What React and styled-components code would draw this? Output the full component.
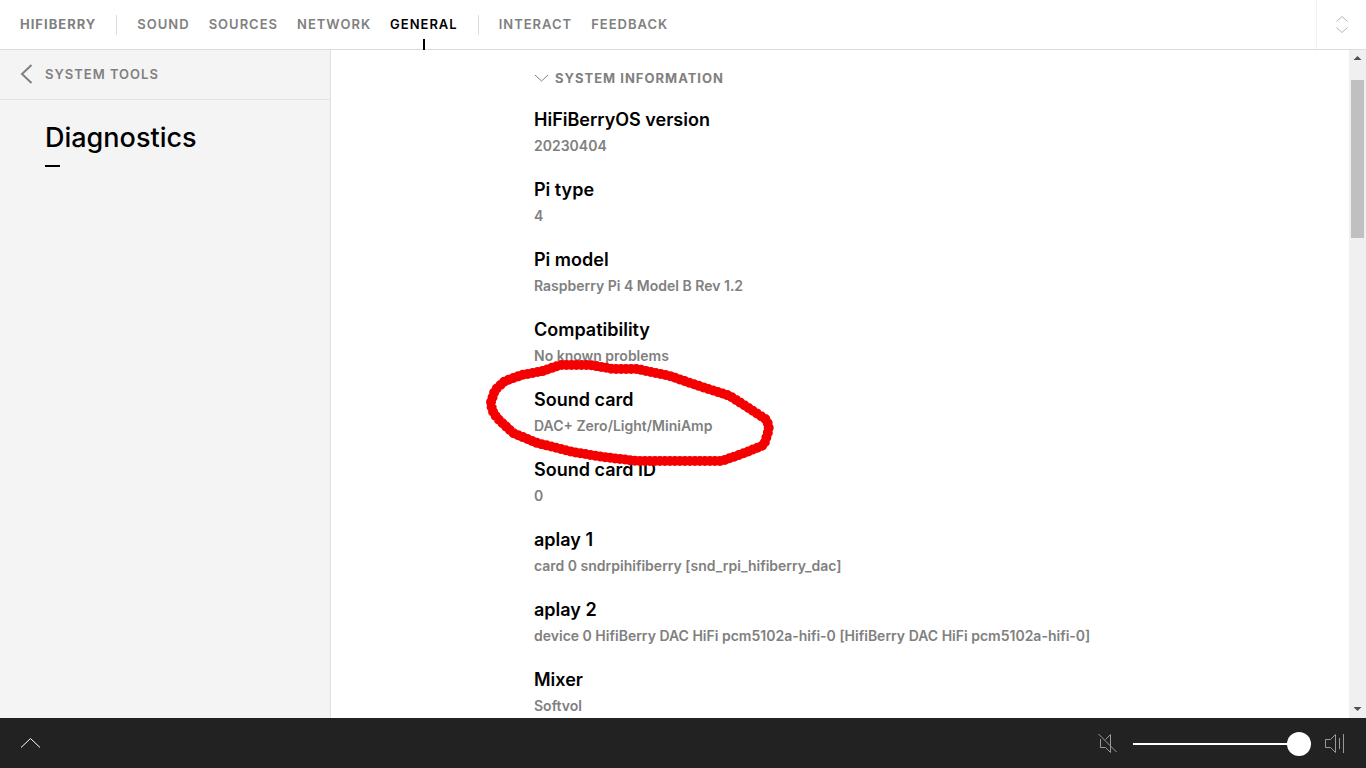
import React, { useState } from "react";
import styled, { createGlobalStyle } from "styled-components";

const navGroups = [
  ["HIFIBERRY"],
  ["SOUND", "SOURCES", "NETWORK", "GENERAL"],
  ["INTERACT", "FEEDBACK"],
];

const systemInfo = [
  { label: "HiFiBerryOS version", value: "20230404" },
  { label: "Pi type", value: "4" },
  { label: "Pi model", value: "Raspberry Pi 4 Model B Rev 1.2" },
  { label: "Compatibility", value: "No known problems" },
  { label: "Sound card", value: "DAC+ Zero/Light/MiniAmp", marked: true },
  { label: "Sound card ID", value: "0" },
  { label: "aplay 1", value: "card 0 sndrpihifiberry [snd_rpi_hifiberry_dac]" },
  {
    label: "aplay 2",
    value: "device 0 HifiBerry DAC HiFi pcm5102a-hifi-0 [HifiBerry DAC HiFi pcm5102a-hifi-0]",
  },
  { label: "Mixer", value: "Softvol" },
];

function App() {
  const [active, setActive] = useState("GENERAL");
  const [volume, setVolume] = useState(100);

  return (
    <Page>
      <GlobalStyle />
      <Header>
        <Nav>
          {navGroups.map((group, index) => (
            <NavGroup key={index}>
              {group.map((name) => (
                <NavButton
                  key={name}
                  type="button"
                  $brand={index === 0}
                  $active={name === active}
                  onClick={() => setActive(name)}
                >
                  {name}
                </NavButton>
              ))}
            </NavGroup>
          ))}
        </Nav>
        <SwitchButton type="button" aria-label="Switch product">
          <svg width="14" height="20" viewBox="0 0 14 20" fill="none" stroke="#b4b4b4">
            <path d="M1.5 6.5 7 1.5l5.5 5M1.5 12.5 7 17.5l5.5-5" />
          </svg>
        </SwitchButton>
      </Header>

      <Main>
        <Sidebar>
          <BackButton type="button">
            <svg width="13" height="20" viewBox="0 0 13 20" fill="none" stroke="#808080" strokeWidth="2">
              <path d="M11.5 1 2 10l9.5 9" />
            </svg>
            SYSTEM TOOLS
          </BackButton>
          <Title>Diagnostics</Title>
        </Sidebar>

        <Content>
          <Column>
            <SectionButton type="button" aria-expanded="true">
              <svg width="14" height="8" viewBox="0 0 14 8" fill="none" stroke="#808080">
                <path d="M1 1l6.5 6L14 1" />
              </svg>
              SYSTEM INFORMATION
            </SectionButton>
            <InfoList>
              {systemInfo.map((item) => (
                <InfoItem key={item.label}>
                  <InfoLabel>{item.label}</InfoLabel>
                  <InfoValue>{item.value}</InfoValue>
                  {item.marked && <Marker />}
                </InfoItem>
              ))}
            </InfoList>
          </Column>
        </Content>

        <Scrollbar aria-hidden="true">
          <svg width="17" height="17" viewBox="0 0 17 17" fill="#505050">
            <path d="M4.5 10 8.5 6 12.5 10z" />
          </svg>
          <ScrollTrack>
            <ScrollThumb />
          </ScrollTrack>
          <svg width="17" height="17" viewBox="0 0 17 17" fill="#505050">
            <path d="M4.5 6 8.5 10 12.5 6z" />
          </svg>
        </Scrollbar>
      </Main>

      <Footer>
        <PlayerButton type="button" aria-label="Show player">
          <svg width="20" height="12" viewBox="0 0 20 12" fill="none" stroke="#fff">
            <path d="M1 10.5 10.5 1.5 20 10.5" />
          </svg>
        </PlayerButton>
        <Volume>
          <PlayerButton type="button" aria-label="Mute" onClick={() => setVolume(0)}>
            <svg width="21" height="20" viewBox="0 0 21 20" fill="none" stroke="#999">
              <path d="M2.5 6v8.5h5l5 5v-18l-5 5M.5 1l18 18" />
            </svg>
          </PlayerButton>
          <VolumeSlider
            type="range"
            min="0"
            max="100"
            aria-label="Volume"
            value={volume}
            onChange={(event) => setVolume(Number(event.target.value))}
          />
          <PlayerButton type="button" aria-label="Full volume" onClick={() => setVolume(100)}>
            <svg width="20" height="20" viewBox="0 0 20 20" fill="none" stroke="#999">
              <path d="M.5 6.5v8h5l5 5v-18l-5 5zM14.5 5v11M18.5 1v19" />
            </svg>
          </PlayerButton>
        </Volume>
      </Footer>
    </Page>
  );
}

// Hand drawn loop around a row, dotted on with a round brush
function Marker() {
  return (
    <MarkerSvg width="290" height="108" viewBox="0 0 290 108" fill="none" aria-hidden="true">
      <path
        d="M5 43 9 31 19 22 36 16 57 12 74 6H104L127 10 151 10 184 17 204 24 244 37 264 50 281 61 283 70 278 86 261 93 236 102H151L117 98 87 93 51 84 27 74 11 59 6 51Z"
        stroke="#f40000"
        strokeWidth="10"
        strokeLinejoin="round"
        strokeLinecap="round"
        strokeDasharray="0 5"
      />
    </MarkerSvg>
  );
}

const GlobalStyle = createGlobalStyle`
  * {
    box-sizing: border-box;
  }

  body {
    margin: 0;
    background-color: #fff;
    font-family: Inter, "Liberation Sans", sans-serif;
  }

  button {
    padding: 0;
    border: none;
    background: none;
    font-family: inherit;
    cursor: pointer;
  }

  svg {
    display: block;
    flex-shrink: 0;
  }
`;

const Page = styled.div`
  display: flex;
  flex-direction: column;
  height: 100vh;
`;

const Header = styled.header`
  display: flex;
  flex-shrink: 0;
  justify-content: space-between;
  height: 50px;
  border-bottom: 1px solid #dcdcdc;
`;

const Nav = styled.nav`
  display: flex;
  align-items: center;
`;

const NavGroup = styled.div`
  display: flex;
  gap: 19px;
  padding: 0 20px;

  & + & {
    border-left: 1px solid #dcdcdc;
  }
`;

const NavButton = styled.button`
  position: relative;
  height: 20px;
  padding-bottom: 2px;
  color: ${({ $active }) => ($active ? "#000" : "#808080")};
  font-size: 13px;
  font-weight: ${({ $brand }) => ($brand ? 700 : 600)};
  line-height: 18px;
  letter-spacing: 1px;

  &::after {
    content: "";
    display: ${({ $active }) => ($active ? "block" : "none")};
    position: absolute;
    top: 24px;
    left: calc(50% - 1px);
    width: 2px;
    height: 11px;
    background-color: #000;
  }
`;

const SwitchButton = styled.button`
  display: flex;
  align-items: center;
  justify-content: center;
  width: 50px;
  border-left: 1px solid #f0f0f0;
`;

const Main = styled.main`
  display: flex;
  flex: 1;
  min-height: 0;
`;

const Sidebar = styled.aside`
  flex-shrink: 0;
  width: 331px;
  background-color: #f4f4f4;
  border-right: 1px solid #e0e0e0;
`;

const BackButton = styled.button`
  display: flex;
  align-items: center;
  gap: 12px;
  width: 100%;
  height: 50px;
  padding: 0 20px 2px;
  border-bottom: 1px solid #e4e4e4;
  color: #808080;
  font-size: 13px;
  font-weight: 600;
  letter-spacing: 1px;
`;

const Title = styled.h1`
  margin: 20px 45px;
  font-size: 27px;
  font-weight: 500;
  line-height: 36px;

  &::after {
    content: "";
    display: block;
    width: 15px;
    height: 2px;
    margin-top: 9px;
    background-color: #000;
  }
`;

const Content = styled.section`
  flex: 1;
  min-width: 0;
  overflow: hidden;
`;

const Column = styled.div`
  max-width: 612px;
  margin: 0 auto;
  padding-top: 18px;
`;

const SectionButton = styled.button`
  display: flex;
  align-items: center;
  gap: 7px;
  height: 20px;
  color: #808080;
  font-size: 13px;
  font-weight: 700;
  letter-spacing: 1px;
`;

const InfoList = styled.dl`
  margin: 19px 0 0;
`;

const InfoItem = styled.div`
  position: relative;
  height: 70px;
`;

const InfoLabel = styled.dt`
  font-size: 18px;
  font-weight: 600;
  line-height: 26px;
`;

const InfoValue = styled.dd`
  margin: 0;
  color: #808080;
  font-size: 14px;
  font-weight: 600;
  line-height: 26px;
`;

const MarkerSvg = styled.svg`
  position: absolute;
  top: -28px;
  left: -48px;
  z-index: 1;
  pointer-events: none;
`;

const Scrollbar = styled.div`
  display: flex;
  flex-direction: column;
  width: 17px;
  background-color: #f0f0f0;
`;

const ScrollTrack = styled.div`
  flex: 1;
  padding: 13px 2px;
`;

const ScrollThumb = styled.div`
  height: 26%;
  background-color: #c0c0c0;
`;

const Footer = styled.footer`
  display: flex;
  flex-shrink: 0;
  align-items: center;
  justify-content: space-between;
  height: 50px;
  padding: 0 21px 0 20px;
  background-color: #222;
`;

const PlayerButton = styled.button`
  display: flex;
  align-items: center;
  height: 50px;
`;

const Volume = styled.div`
  display: flex;
  align-items: center;
  gap: 14px;
`;

const VolumeSlider = styled.input`
  appearance: none;
  width: 178px;
  height: 26px;
  margin: 0;
  padding-top: 2px;
  background: linear-gradient(#fff, #fff) center 13px / 100% 2px no-repeat;

  &::-webkit-slider-thumb {
    appearance: none;
    width: 24px;
    height: 24px;
    border-radius: 50%;
    background-color: #fff;
  }
`;

export default App;
